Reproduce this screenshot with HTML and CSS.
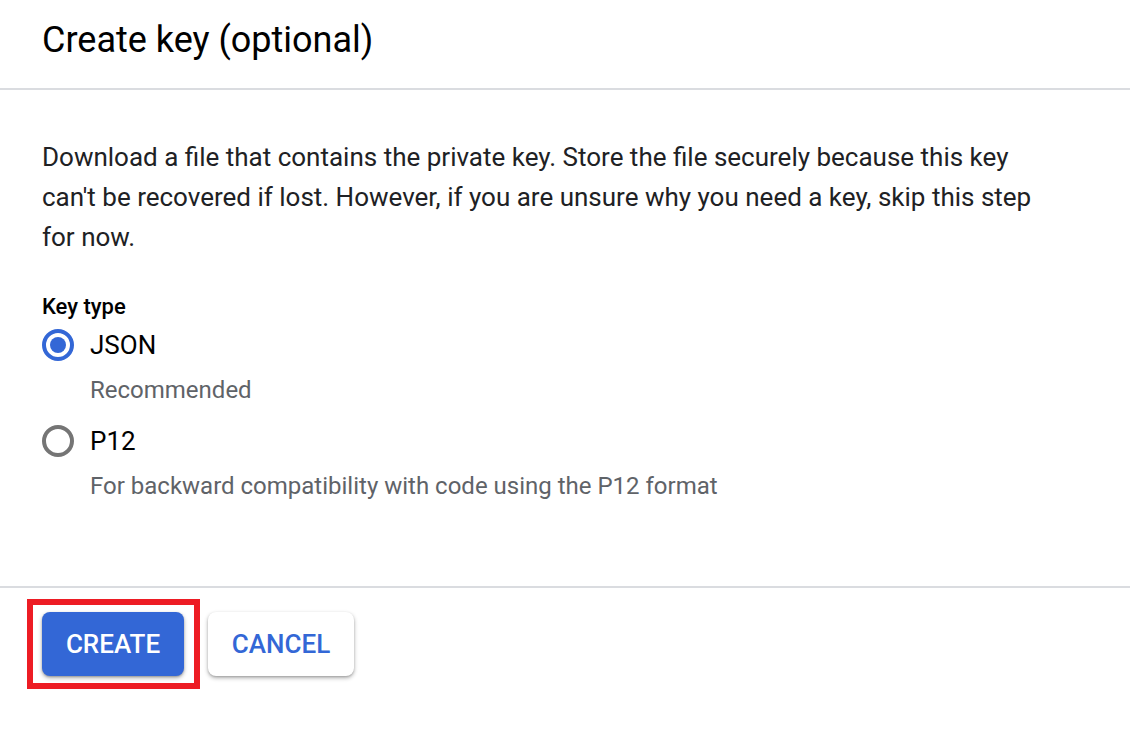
FILE: index.html
```html
<!DOCTYPE html>
<html>
<head>
<meta charset="utf-8">
<link rel="stylesheet" href="styles.css">
</head>
<body>
<div class="page">
  <header class="header">
    <h1 class="title">Create key (optional)</h1>
  </header>
  <section class="content">
    <p class="intro">Download a file that contains the private key. Store the file securely because this key can't be recovered if lost. However, if you are unsure why you need a key, skip this step for now.</p>
    <div class="label">Key type</div>
    <div class="option">
      <span class="radio checked"></span>
      <span class="option-text">JSON</span>
    </div>
    <div class="desc">Recommended</div>
    <div class="option option-second">
      <span class="radio"></span>
      <span class="option-text">P12</span>
    </div>
    <div class="desc desc-last">For backward compatibility with code using the P12 format</div>
  </section>
  <footer class="footer">
    <div class="highlight">
      <button class="btn btn-primary">CREATE</button>
    </div>
    <button class="btn btn-secondary">CANCEL</button>
  </footer>
</div>
</body>
</html>
```

FILE: styles.css
```css
html, body {
  margin: 0;
  padding: 0;
  background: #ffffff;
}
body {
  font-family: Roboto, "Liberation Sans", Arial, sans-serif;
  color: #202124;
}
.page {
  width: 1130px;
  height: 730px;
  display: flex;
  flex-direction: column;
}
.header {
  height: 88px;
  border-bottom: 2px solid #dadce0;
  box-sizing: content-box;
  padding: 0 42px;
}
.title {
  margin: 0;
  padding-top: 20px;
  font-size: 36px;
  line-height: 40px;
  font-weight: 400;
  color: #000000;
}
.content {
  padding: 47px 42px 0;
  height: 449px;
  border-bottom: 2px solid #dadce0;
  box-sizing: content-box;
}
.intro {
  margin: 0;
  font-size: 26px;
  line-height: 40px;
  color: #202124;
  max-width: 1000px;
}
.label {
  margin-top: 36px;
  font-size: 22px;
  line-height: 28px;
  font-weight: 500;
  color: #000000;
}
.option {
  display: flex;
  align-items: center;
  height: 48px;
  gap: 16px;
}
.option-second {
  margin-top: 11px;
}
.radio {
  width: 32px;
  height: 32px;
  box-sizing: border-box;
  border-radius: 50%;
  border: 4px solid #757575;
  position: relative;
  flex: none;
}
.radio.checked {
  border-color: #3367d6;
}
.radio.checked::after {
  content: "";
  position: absolute;
  left: 4px;
  top: 4px;
  width: 16px;
  height: 16px;
  border-radius: 50%;
  background: #3367d6;
}
.option-text {
  font-size: 26px;
  line-height: 32px;
  color: #000000;
}
.desc {
  margin-left: 48px;
  margin-top: 5px;
  font-size: 24px;
  line-height: 32px;
  color: #5f6368;
}
.desc-last {
  margin-top: 5px;
}
.footer {
  display: flex;
  gap: 24px;
  padding: 24px 42px 0;
  align-items: flex-start;
}
.highlight {
  position: relative;
}
.highlight::before {
  content: "";
  position: absolute;
  left: -15px;
  right: -16px;
  top: -13px;
  bottom: -13px;
  border: 6px solid #ed1c24;
  pointer-events: none;
}
.btn {
  display: block;
  height: 64px;
  border: none;
  border-radius: 8px;
  font-family: Roboto, "Liberation Sans", Arial, sans-serif;
  font-size: 26px;
  font-weight: 500;
  padding: 0;
  cursor: pointer;
}
.btn-primary {
  width: 142px;
  background: #3367d6;
  color: #ffffff;
  box-shadow: 0 2px 4px rgba(0,0,0,0.3), 0 1px 2px rgba(0,0,0,0.2);
}
.btn-secondary {
  width: 146px;
  background: #ffffff;
  color: #3367d6;
  box-shadow: 0 2px 4px rgba(0,0,0,0.3), 0 1px 2px rgba(0,0,0,0.15);
}
```
